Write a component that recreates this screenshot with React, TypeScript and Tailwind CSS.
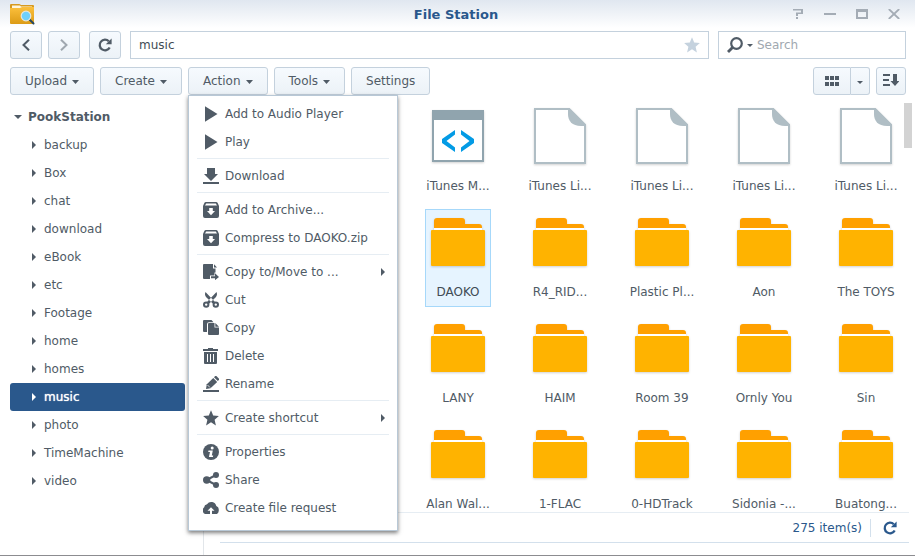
import { useState } from 'react';
import type { ReactNode } from 'react';
import { clsx } from 'clsx';

type IconName =
  | 'play'
  | 'download'
  | 'archive'
  | 'move'
  | 'cut'
  | 'copy'
  | 'delete'
  | 'rename'
  | 'star'
  | 'info'
  | 'share'
  | 'cloud';

interface MenuEntry {
  label: string;
  icon: IconName;
  submenu?: boolean;
}

interface FileEntry {
  name: string;
  kind: 'folder' | 'file' | 'code';
}

const sharedFolders = [
  'backup',
  'Box',
  'chat',
  'download',
  'eBook',
  'etc',
  'Footage',
  'home',
  'homes',
  'music',
  'photo',
  'TimeMachine',
  'video',
];

const menuGroups: MenuEntry[][] = [
  [
    { label: 'Add to Audio Player', icon: 'play' },
    { label: 'Play', icon: 'play' },
  ],
  [{ label: 'Download', icon: 'download' }],
  [
    { label: 'Add to Archive...', icon: 'archive' },
    { label: 'Compress to DAOKO.zip', icon: 'archive' },
  ],
  [
    { label: 'Copy to/Move to ...', icon: 'move', submenu: true },
    { label: 'Cut', icon: 'cut' },
    { label: 'Copy', icon: 'copy' },
    { label: 'Delete', icon: 'delete' },
    { label: 'Rename', icon: 'rename' },
  ],
  [{ label: 'Create shortcut', icon: 'star', submenu: true }],
  [
    { label: 'Properties', icon: 'info' },
    { label: 'Share', icon: 'share' },
    { label: 'Create file request', icon: 'cloud' },
  ],
];

const files: FileEntry[] = [
  { name: 'iTunes M...', kind: 'code' },
  { name: 'iTunes Li...', kind: 'file' },
  { name: 'iTunes Li...', kind: 'file' },
  { name: 'iTunes Li...', kind: 'file' },
  { name: 'iTunes Li...', kind: 'file' },
  { name: 'DAOKO', kind: 'folder' },
  { name: 'R4_RID...', kind: 'folder' },
  { name: 'Plastic Pl...', kind: 'folder' },
  { name: 'Aon', kind: 'folder' },
  { name: 'The TOYS', kind: 'folder' },
  { name: 'LANY', kind: 'folder' },
  { name: 'HAIM', kind: 'folder' },
  { name: 'Room 39', kind: 'folder' },
  { name: 'Ornly You', kind: 'folder' },
  { name: 'Sin', kind: 'folder' },
  { name: 'Alan Wal...', kind: 'folder' },
  { name: '1-FLAC', kind: 'folder' },
  { name: '0-HDTrack', kind: 'folder' },
  { name: 'Sidonia -...', kind: 'folder' },
  { name: 'Buatong...', kind: 'folder' },
];

const menuIcons: Record<IconName, ReactNode> = {
  play: <path d="M2 0.3 14.5 8 2 15.700z" />,
  download: <path d="M4 0h8v6h3l-7 7-7-7h3zM0 14h16v2H0z" />,
  archive: (
    <path
      fillRule="evenodd"
      d="M3 0h10a2 2 0 0 1 1.800 1.200L16 4v10a2 2 0 0 1-2 2H2a2 2 0 0 1-2-2V4l1.200-2.800A2 2 0 0 1 3 0zM3.200 1.500 2 3.500h12l-1.200-2zM6.200 6v3H4l4 4.200L12 9H9.800V6z"
    />
  ),
  move: (
    <>
      <path d="M1 0h9v4.500h2.500v4h-1v3H7V15H1a1 1 0 0 1-1-1V1a1 1 0 0 1 1-1z" />
      <path d="M11 0.200 14 3.500h-3z" />
      <path d="M8 12.300h4V9.200l4 3.700-4 3.300v-2H8z" />
    </>
  ),
  cut: (
    <>
      <path d="M2.500 0C1.600 2 2 3.500 3 5l7.200 7 1.800-2zM13.500 0c.9 2 .5 3.500-.5 5l-7.200 7L4 10z" />
      <circle cx="3.200" cy="12.600" r="2.200" fill="none" stroke="currentColor" strokeWidth="2" />
      <circle cx="12.800" cy="12.600" r="2.200" fill="none" stroke="currentColor" strokeWidth="2" />
    </>
  ),
  copy: (
    <>
      <path d="M1 0h7.500l2 2.200H6a2 2 0 0 0-2 2V12H1a1 1 0 0 1-1-1V1a1 1 0 0 1 1-1z" />
      <path d="M6 3h5.500v4.500H16V14a1 1 0 0 1-1 1H6a1 1 0 0 1-1-1V4a1 1 0 0 1 1-1z" />
      <path d="M12.300 3 16 6.700h-3.700z" />
    </>
  ),
  delete: (
    <path
      fillRule="evenodd"
      d="M5 0h5v1h5v2H0V1h5zM1 4h13v11a1 1 0 0 1-1 1H2a1 1 0 0 1-1-1zM4 6v8h1V6zM7 6v8h1V6zM10 6v8h1V6z"
    />
  ),
  rename: (
    <>
      <path d="m11 1.200 1-1a1.200 1.200 0 0 1 1.600 0l2.200 2.200a1.200 1.200 0 0 1 0 1.600l-1 1z" />
      <path d="m10.300 2 3.900 3.900-6.700 6.300L3 13l.8-4.700z" />
      <path d="M0 14h16v2H0z" />
      <path d="m4.500 9 2.500 2.500" stroke="white" strokeWidth="0.8" />
    </>
  ),
  star: <path d="m8 .3 2.200 5.200 5.700.5-4.300 3.700L12.900 15.500 8 12.300 3.100 15.500l1.300-5.800L.1 6l5.700-.5z" />,
  info: (
    <>
      <circle cx="8" cy="8" r="8" />
      <circle cx="9.200" cy="3.900" r="1.500" fill="white" />
      <path d="M5.500 6.500h4.300L8.800 11.500h1.400l-.3 1.500H5.900l1.100-5H5.200z" fill="white" />
    </>
  ),
  share: (
    <>
      <path d="M3.500 8 13 3M3.500 8 13 13" fill="none" stroke="currentColor" strokeWidth="2" />
      <circle cx="3.700" cy="8" r="3.700" />
      <circle cx="13" cy="3" r="3" />
      <circle cx="13" cy="13" r="3" />
    </>
  ),
  cloud: (
    <>
      <path d="M2 14A4 4 0 0 1 1.200 7.300 3.300 3.300 0 0 1 4 4.200a5.200 5.200 0 0 1 9.300 1.700A3.400 3.400 0 0 1 15.700 9.500 4.600 4.600 0 0 1 14 14z" />
      <path d="M7 14v-3.200H4.500L8 7.200l3.500 3.600H9V14z" fill="white" />
    </>
  ),
};

function MenuIcon({ name }: { name: IconName }) {
  return (
    <svg viewBox="0 0 16 16" className="size-4 shrink-0 text-[#505b66]" fill="currentColor" aria-hidden="true">
      {menuIcons[name]}
    </svg>
  );
}

function CaretDown() {
  return (
    <svg viewBox="0 0 7 4" className="mt-0.5 h-1 w-[7px] shrink-0" fill="currentColor" aria-hidden="true">
      <path d="M0 0h7L3.500 4z" />
    </svg>
  );
}

function CaretRight() {
  return (
    <svg viewBox="0 0 4 8" className="h-2 w-1 shrink-0" fill="currentColor" aria-hidden="true">
      <path d="M0 0 4 4 0 8z" />
    </svg>
  );
}

function ReloadIcon({ className }: { className?: string }) {
  return (
    <svg viewBox="0 0 14 14" className={className} fill="none" aria-hidden="true">
      <path d="M11.700 9.500A5.300 5.300 0 1 1 10.800 3.300" stroke="currentColor" strokeWidth="2.300" />
      <path d="M13.600 .6V6.300H7.800z" fill="currentColor" />
    </svg>
  );
}

function FileIcon({ kind }: { kind: FileEntry['kind'] }) {
  return (
    <svg viewBox="0 0 64 64" className="size-16 drop-shadow-[0_1px_1px_rgba(0,0,0,0.18)]" aria-hidden="true">
      {kind === 'folder' && (
        <>
          <path d="M8 19v-8q0-3 3-3h25q3 0 3 3v3h14q3 0 3 3v2z" fill="#ffa000" />
          <path d="M8 18h48v2H8z" fill="#ffffff" />
          <rect x="5" y="20" width="54" height="36" rx="1" fill="#ffb300" />
        </>
      )}
      {kind === 'file' && (
        <>
          <path d="M7 5h34l16 16v38H7z" fill="#ffffff" stroke="#b0bec5" strokeWidth="2" />
          <path d="M40 4h1.500L58 20.500V22H53C44 22 40 17 40 10z" fill="#b0bec5" />
        </>
      )}
      {kind === 'code' && (
        <>
          <path d="M7 7h50v50H7z" fill="#ffffff" stroke="#90a4ae" strokeWidth="2" />
          <path d="M6 6h52v10H6z" fill="#90a4ae" />
          <path d="M29 26v4.500L20.500 37l8.500 6.500V48L16 39v-4zM35 26v4.500l8.500 6.500-8.500 6.500V48l13-9v-4z" fill="#039be5" />
        </>
      )}
    </svg>
  );
}

function AppLogo() {
  return (
    <svg viewBox="0 0 25 21" className="h-[21px] w-[25px]" aria-hidden="true">
      <defs>
        <linearGradient id="logo-folder" x1="0" y1="0" x2="0" y2="1">
          <stop offset="0" stopColor="#fcc03c" />
          <stop offset="1" stopColor="#dc9b16" />
        </linearGradient>
      </defs>
      <path d="M0 1q0-1 1-1h8q1 0 2 1h12q1 0 1 1v5H0z" fill="#d79a20" />
      <path d="M2 1.500h8l1 1h11V6H2z" fill="#fff6dc" />
      <path d="M0 4h10l2-1h12v16q0 1-1 1H1q-1 0-1-1z" fill="url(#logo-folder)" />
      <path d="m19.500 15.500 4 4" stroke="#27485f" strokeWidth="2" strokeLinecap="round" />
      <circle cx="16" cy="12" r="4.800" fill="#6fd0fa" stroke="#e3e6dc" strokeWidth="1.200" />
    </svg>
  );
}

const buttonClass =
  'flex h-7 shrink-0 items-center justify-center rounded-[3px] border border-[#c4d1dd] bg-linear-to-b from-[#f6fafe] to-[#ecf2f7] text-[#505b66]';

function ToolbarButton({ label, menu = false, onClick }: { label: string; menu?: boolean; onClick?: () => void }) {
  return (
    <button type="button" onClick={onClick} className={clsx(buttonClass, 'gap-[5px] px-3.5')}>
      {label}
      {menu && <CaretDown />}
    </button>
  );
}

function ActionMenu() {
  return (
    <div
      role="menu"
      className="absolute top-full left-0 z-10 w-[210px] border border-[#b8c8d6] bg-white pt-1 pb-2 shadow-[0_2px_4px_rgba(0,0,0,0.5)]"
    >
      {menuGroups.map((group, index) => (
        <div key={group[0].label}>
          {index > 0 && <div className="mx-2 mt-0.5 mb-[3px] h-px bg-[#e6edf3]" />}
          {group.map(entry => (
            <button
              key={entry.label}
              type="button"
              role="menuitem"
              className="flex h-7 w-full items-center gap-1.5 pr-3 pl-3.5 text-left hover:bg-[#e6f4ff]"
            >
              <MenuIcon name={entry.icon} />
              <span className="flex-1 whitespace-nowrap">{entry.label}</span>
              {entry.submenu && <CaretRight />}
            </button>
          ))}
        </div>
      ))}
    </div>
  );
}

function TitleBar() {
  return (
    <header className="flex h-7 items-center bg-linear-to-b from-[#e0e7f0] to-white pr-[13px] pl-2.5">
      <div className="flex flex-1">
        <AppLogo />
      </div>
      <h1 className="pt-0.5 text-[13px] font-bold text-[#2a588c]">File Station</h1>
      <div className="flex flex-1 justify-end gap-4 text-[#a4acb5]">
        <button type="button" aria-label="Help" className="flex size-4 items-center justify-center">
          <svg viewBox="0 0 12 10" className="h-2.5 w-3" fill="currentColor">
            <path d="M1 0h10v5H6v2H4V3.500h5v-2H1zM4 8h2v2H4z" />
          </svg>
        </button>
        <button type="button" aria-label="Minimize" className="flex size-4 items-center justify-center">
          <span className="h-0.5 w-3 bg-[#a4acb5]" />
        </button>
        <button type="button" aria-label="Maximize" className="flex size-4 items-center justify-center">
          <span className="h-2.5 w-3 border-2 border-t-[3px] border-[#a4acb5]" />
        </button>
        <button type="button" aria-label="Close" className="flex size-4 items-center justify-center">
          <svg viewBox="0 0 12 10" className="h-2.5 w-3" stroke="currentColor" strokeWidth="1.800">
            <path d="m.8 0 10.400 10M11.200 0 .8 10" />
          </svg>
        </button>
      </div>
    </header>
  );
}

function NavigationRow() {
  return (
    <div className="flex items-center gap-[9px] pr-[9px] pl-2.5">
      <div className="flex gap-1.5">
        <button type="button" aria-label="Back" className={clsx(buttonClass, 'w-8')}>
          <svg viewBox="0 0 8 12" className="h-3 w-2" fill="none" stroke="currentColor" strokeWidth="2">
            <path d="M7 .7 1.500 6 7 11.300" />
          </svg>
        </button>
        <button type="button" aria-label="Forward" className={clsx(buttonClass, 'w-8')}>
          <svg viewBox="0 0 8 12" className="h-3 w-2 opacity-50" fill="none" stroke="currentColor" strokeWidth="2">
            <path d="M1 .7 6.500 6 1 11.300" />
          </svg>
        </button>
      </div>
      <button type="button" aria-label="Refresh" className={clsx(buttonClass, 'w-8')}>
        <ReloadIcon className="size-3.5" />
      </button>
      <div className="flex h-7 flex-1 items-center border border-[#c4d1dd] bg-white pr-2 pl-2">
        <input
          type="text"
          aria-label="Path"
          defaultValue="music"
          className="min-w-0 flex-1 bg-transparent text-[#414b55] outline-none"
        />
        <button type="button" aria-label="Add to favorites">
          <svg viewBox="0 0 16 16" className="size-4 text-[#c5d2de]" fill="currentColor">
            {menuIcons.star}
          </svg>
        </button>
      </div>
      <div className="flex h-7 w-[188px] items-center border border-[#c4d1dd] bg-white pl-2 text-[#505b66]">
        <button type="button" aria-label="Search options" className="flex items-center gap-1">
          <svg viewBox="0 0 16 16" className="size-4" fill="none" stroke="currentColor">
            <circle cx="9.500" cy="6.500" r="5.300" strokeWidth="2.200" />
            <path d="M5.500 10.500 1 15" strokeWidth="2.800" />
          </svg>
          <svg viewBox="0 0 6 3" className="h-[3px] w-1.5" fill="currentColor">
            <path d="M0 0h6L3 3z" />
          </svg>
        </button>
        <input
          type="search"
          aria-label="Search"
          placeholder="Search"
          className="ml-1 min-w-0 flex-1 bg-transparent outline-none placeholder:text-[#a0a8b0]"
        />
      </div>
    </div>
  );
}

function Toolbar() {
  const [actionOpen, setActionOpen] = useState(true);

  return (
    <div className="flex gap-1.5 pr-[9px] pl-2.5">
      <ToolbarButton label="Upload" menu />
      <ToolbarButton label="Create" menu />
      <div className="relative">
        <ToolbarButton label="Action" menu onClick={() => setActionOpen(!actionOpen)} />
        {actionOpen && <ActionMenu />}
      </div>
      <ToolbarButton label="Tools" menu />
      <ToolbarButton label="Settings" />
      <div className="ml-auto flex gap-1.5">
        <div className="flex">
          <button type="button" aria-label="Thumbnail view" className={clsx(buttonClass, 'w-[38px] rounded-r-none')}>
            <svg viewBox="0 0 14 10" className="h-2.5 w-3.5" fill="currentColor">
              <path d="M0 0h4v4H0zM5 0h4v4H5zM10 0h4v4h-4zM0 6h4v4H0zM5 6h4v4H5zM10 6h4v4h-4z" />
            </svg>
          </button>
          <button type="button" aria-label="View options" className={clsx(buttonClass, 'w-[19px] rounded-l-none border-l-0')}>
            <svg viewBox="0 0 6 3" className="mt-0.5 h-[3px] w-1.5" fill="currentColor">
              <path d="M0 0h6L3 3z" />
            </svg>
          </button>
        </div>
        <button type="button" aria-label="Sort" className={clsx(buttonClass, 'w-[30px]')}>
          <svg viewBox="0 0 16 12" className="mb-0.5 h-3 w-4" fill="currentColor">
            <path d="M0 0h7v2H0zM0 5h6v2H0zM0 10h7v2H0zM10 0h4v7h2.500L12 12 7.500 7H10z" />
          </svg>
        </button>
      </div>
    </div>
  );
}

function FolderTree() {
  const [selected, setSelected] = useState('music');

  return (
    <aside className="w-[203px] shrink-0 pr-[18px] pl-2.5">
      <button type="button" className="flex h-7 w-full items-center gap-1.5 pl-1 font-bold">
        <svg viewBox="0 0 8 4" className="h-1 w-2" fill="currentColor">
          <path d="M0 0h8L4 4z" />
        </svg>
        PookStation
      </button>
      <ul>
        {sharedFolders.map(folder => (
          <li key={folder}>
            <button
              type="button"
              onClick={() => setSelected(folder)}
              className={clsx(
                'flex h-7 w-full items-center gap-2 rounded-[3px] pl-[22px]',
                selected === folder && 'bg-[#2a588c] text-white text-shadow-[0_0_1px_#ffffff]',
              )}
            >
              <CaretRight />
              {folder}
            </button>
          </li>
        ))}
      </ul>
    </aside>
  );
}

function FileGrid() {
  const [selected, setSelected] = useState(5);

  return (
    <div className="flex min-h-0 flex-1">
      <div className="grid flex-1 grid-cols-[repeat(auto-fill,66px)] content-start gap-x-9 gap-y-2 overflow-hidden pl-[205px]">
        {files.map((file, index) => (
          <button
            key={index}
            type="button"
            onClick={() => setSelected(index)}
            className={clsx(
              'flex h-[98px] flex-col items-center border',
              selected === index ? 'border-[#a6d8fa] bg-[#e6f4ff] text-[#414b55]' : 'border-transparent',
            )}
          >
            <FileIcon kind={file.kind} />
            <span className="mt-2 leading-5 whitespace-nowrap">{file.name}</span>
          </button>
        ))}
      </div>
      <div className="mr-[3px] h-[45px] w-2 bg-[#d3d3d3]" />
    </div>
  );
}

export default function App() {
  return (
    <div className="flex h-screen flex-col overflow-hidden border-b border-[#8c8c90] bg-white font-['DejaVu_Sans',Verdana,sans-serif] text-xs text-[#505b66]">
      <TitleBar />
      <div className="flex flex-col gap-2 pt-[3px] pb-2">
        <NavigationRow />
        <Toolbar />
      </div>
      <div className="flex min-h-0 flex-1">
        <FolderTree />
        <main className="flex min-w-0 flex-1 flex-col border-l border-[#e2e6ea] pb-3 pl-4">
          <FileGrid />
          <footer className="mr-1.5 flex h-[31px] shrink-0 items-center justify-end border-y border-t-[#e6edf3] border-b-[#d3e0ec] pr-3 text-[#2a588c]">
            <span>275 item(s)</span>
            <span className="mr-3 ml-2 h-[18px] w-px bg-[#d3e0ec]" />
            <button type="button" aria-label="Reload list">
              <ReloadIcon className="size-3.5" />
            </button>
          </footer>
        </main>
      </div>
    </div>
  );
}
